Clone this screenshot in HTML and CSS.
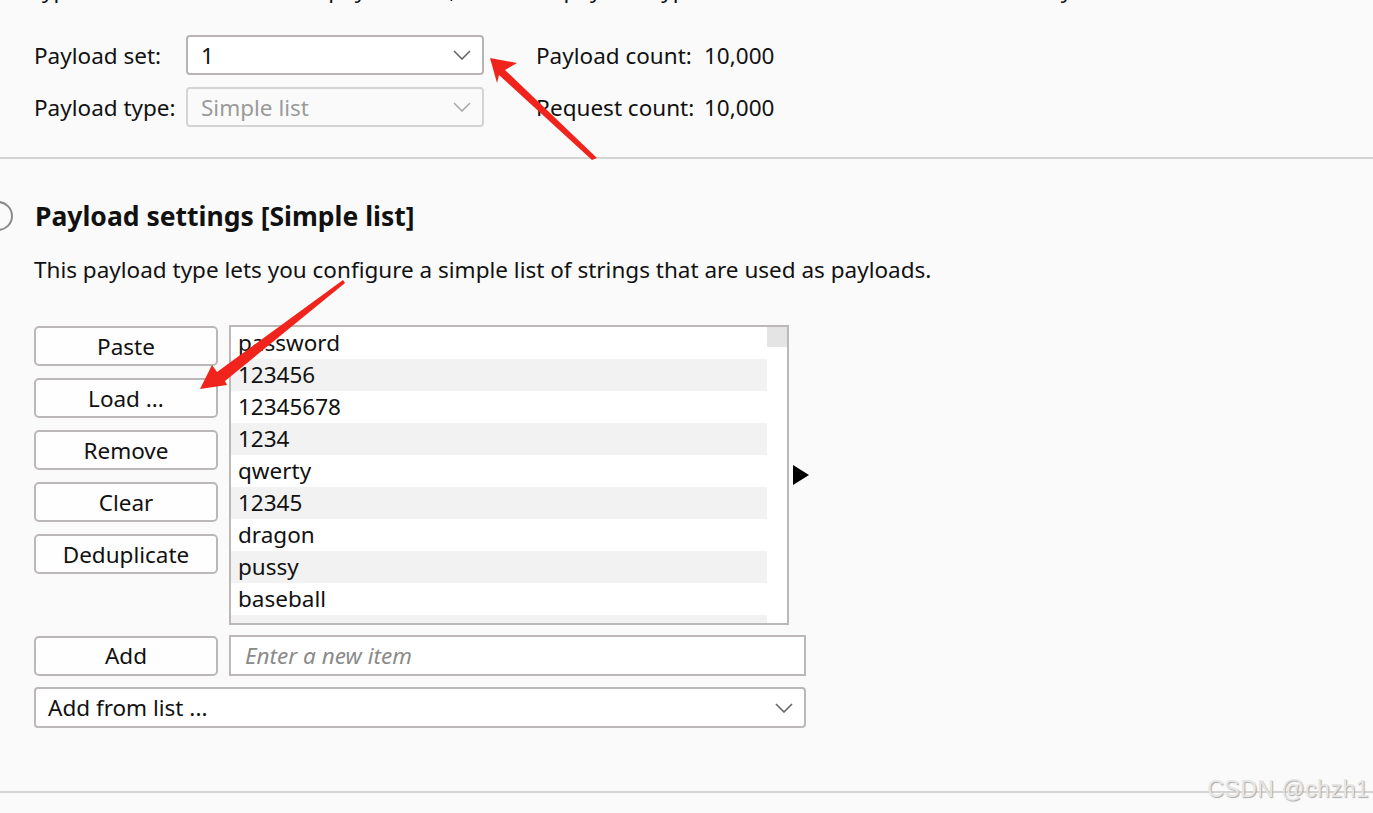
FILE: index.html
```html
<!DOCTYPE html>
<html>
<head>
<meta charset="utf-8">
<link rel="stylesheet" href="styles.css">
</head>
<body>
<div class="page">
  <div class="intro-cut">types are available for each payload set, and each payload type can be customized in different ways.</div>
  <div class="sets">
    <div class="set-row">
      <div class="label">Payload set:</div>
      <div class="select">
        <span class="select-text">1</span>
        <svg class="chev" width="18" height="10" viewBox="0 0 18 10"><polyline points="1,1 9,9 17,1" fill="none" stroke="#666" stroke-width="1.6"/></svg>
      </div>
      <div class="count-label">Payload count:</div>
      <div class="count-value">10,000</div>
    </div>
    <div class="set-row">
      <div class="label">Payload type:</div>
      <div class="select disabled">
        <span class="select-text">Simple list</span>
        <svg class="chev" width="18" height="10" viewBox="0 0 18 10"><polyline points="1,1 9,9 17,1" fill="none" stroke="#aaa" stroke-width="1.6"/></svg>
      </div>
      <div class="count-label">Request count:</div>
      <div class="count-value">10,000</div>
    </div>
  </div>
  <div class="divider"></div>
  <div class="settings">
    <div class="heading-row">
      <span class="circle"></span>
      <h2 class="heading">Payload settings [Simple list]</h2>
    </div>
    <p class="desc">This payload type lets you configure a simple list of strings that are used as payloads.</p>
    <div class="list-area">
      <div class="btn-col">
        <div class="btn">Paste</div>
        <div class="btn">Load ...</div>
        <div class="btn">Remove</div>
        <div class="btn">Clear</div>
        <div class="btn">Deduplicate</div>
      </div>
      <div class="listbox">
        <div class="rows">
          <div class="item">password</div>
          <div class="item alt">123456</div>
          <div class="item">12345678</div>
          <div class="item alt">1234</div>
          <div class="item">qwerty</div>
          <div class="item alt">12345</div>
          <div class="item">dragon</div>
          <div class="item alt">pussy</div>
          <div class="item">baseball</div>
          <div class="item alt"></div>
        </div>
        <div class="scrollbar"><div class="thumb"></div></div>
      </div>
      <div class="tri"></div>
    </div>
    <div class="add-row">
      <div class="btn">Add</div>
      <div class="input">Enter a new item</div>
    </div>
    <div class="add-list">
      <span>Add from list ...</span>
      <svg class="chev" width="18" height="10" viewBox="0 0 18 10"><polyline points="1,1 9,9 17,1" fill="none" stroke="#666" stroke-width="1.6"/></svg>
    </div>
  </div>
  <div class="divider bottom"></div>
</div>
<svg class="annot" width="1373" height="813" viewBox="0 0 1373 813">
  <polygon points="597,158 592,160 499,75 497,83 490,58 517,63 505,70" fill="#f0241c"/>
  <polygon points="343,280 345,283 225,381 227,385 200,389 212,365 217,372" fill="#f0241c"/>
</svg>
<div class="watermark">CSDN @chzh1</div>
</body>
</html>
```

FILE: styles.css
```css
html, body {
  margin: 0;
  padding: 0;
  background: #fafafa;
}
body {
  width: 1373px;
  height: 813px;
  overflow: hidden;
  position: relative;
  font-family: "Noto Sans", "Open Sans", sans-serif;
  font-size: 22.5px;
  color: #111;
}
.page {
  display: flex;
  flex-direction: column;
}
.intro-cut {
  margin-top: -25px;
  height: 30px;
  line-height: 30px;
  padding-left: 34px;
  white-space: nowrap;
}
.sets {
  display: flex;
  flex-direction: column;
  gap: 12px;
  padding: 30px 0 0 34px;
}
.set-row {
  display: flex;
  align-items: center;
  height: 40px;
}
.label {
  width: 152px;
}
.select {
  width: 298px;
  height: 40px;
  box-sizing: border-box;
  border: 2px solid #b8b4b4;
  border-radius: 4px;
  background: #fff;
  display: flex;
  align-items: center;
  justify-content: space-between;
  padding: 0 11px 0 13px;
}
.select.disabled {
  border-color: #d6d3d3;
  background: #fafafa;
  color: #9a9a9a;
}
.chev {
  display: block;
}
.count-label {
  margin-left: 52px;
  width: 168px;
}
.divider {
  height: 2px;
  background: #d3d3d3;
  margin-top: 30px;
}
.settings {
  padding-left: 34px;
  display: flex;
  flex-direction: column;
}
.heading-row {
  display: flex;
  align-items: center;
  height: 40px;
  margin-top: 37px;
}
.circle {
  width: 26px;
  height: 26px;
  border: 2.5px solid #8a8a8a;
  border-radius: 50%;
  margin-left: -51px;
  margin-right: 22px;
  flex: none;
}
.heading {
  margin: 0;
  font-size: 26.5px;
  font-weight: 700;
}
.desc {
  margin: 19px 0 0 0;
  line-height: 30px;
}
.list-area {
  display: flex;
  align-items: flex-start;
  margin-top: 40px;
}
.btn-col {
  display: flex;
  flex-direction: column;
  gap: 12px;
  padding-top: 1px;
  margin-right: 11px;
}
.btn {
  width: 184px;
  height: 40px;
  box-sizing: border-box;
  border: 2px solid #bcb8b8;
  border-radius: 5px;
  background: #fefefe;
  display: flex;
  align-items: center;
  justify-content: center;
}
.listbox {
  width: 560px;
  height: 300px;
  box-sizing: border-box;
  border: 2px solid #bcb8b8;
  background: #fff;
  display: flex;
  overflow: hidden;
}
.rows {
  width: 536px;
  display: flex;
  flex-direction: column;
}
.item {
  height: 32px;
  line-height: 32px;
  padding-left: 7px;
  flex: none;
}
.item.alt {
  background: #f2f2f2;
}
.scrollbar {
  width: 20px;
  background: #fff;
}
.thumb {
  height: 20px;
  background: #e4e4e4;
}
.tri {
  width: 0;
  height: 0;
  border-top: 10px solid transparent;
  border-bottom: 10px solid transparent;
  border-left: 16px solid #000;
  margin: 140px 0 0 4px;
}
.add-row {
  display: flex;
  align-items: center;
  gap: 11px;
  margin-top: 10px;
}
.input {
  width: 577px;
  height: 41px;
  box-sizing: border-box;
  border: 2px solid #bcb8b8;
  background: #fff;
  display: flex;
  align-items: center;
  padding-left: 14px;
  color: #8a8a8a;
  font-style: italic;
}
.add-list {
  width: 772px;
  height: 41px;
  box-sizing: border-box;
  margin-top: 11px;
  border: 2px solid #bcb8b8;
  border-radius: 4px;
  background: #fff;
  display: flex;
  align-items: center;
  justify-content: space-between;
  padding: 0 11px 0 12px;
}
.divider.bottom {
  margin-top: 63px;
}
.annot {
  position: absolute;
  left: 0;
  top: 0;
  pointer-events: none;
}
.watermark {
  position: absolute;
  right: 4px;
  top: 776px;
  font-family: "Liberation Sans", Arial, sans-serif;
  font-size: 23px;
  color: #e6e6e6;
  text-shadow: 1px 1px 1px #a8a8a8;
  letter-spacing: 0.5px;
}
```
